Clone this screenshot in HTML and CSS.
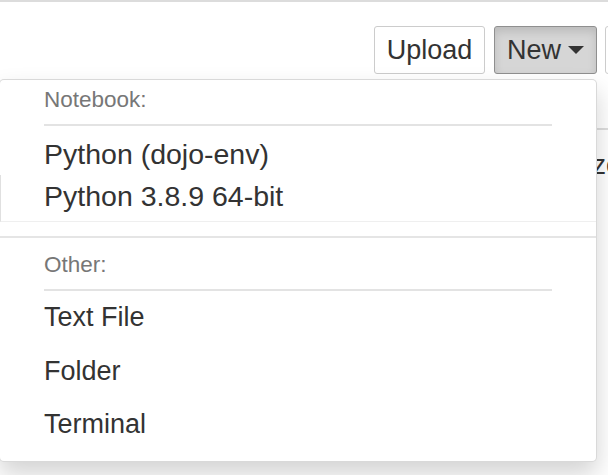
FILE: index.html
```html
<!DOCTYPE html>
<html>
<head>
<meta charset="utf-8">
<link rel="stylesheet" href="styles.css">
</head>
<body>
<div class="topbar"></div>
<div class="toolbar">
  <div class="btn btn-upload">Upload</div>
  <div class="btn btn-new">New <span class="caret"></span></div>
  <div class="btn btn-more"></div>
</div>
<div class="listpanel">
  <div class="listhead">File size</div>
</div>

<div class="dropdown">
  <div class="dd-header">Notebook:</div>
  <div class="dd-rule"></div>
  <div class="kernels">
    <div class="dd-kernel">Python (dojo-env)</div>
    <div class="dd-kernel dd-kernel-framed">Python 3.8.9 64-bit</div>
  </div>
  <div class="dd-divider"></div>
  <div class="dd-header dd-header-other">Other:</div>
  <div class="dd-rule dd-rule-other"></div>
  <div class="dd-item">Text File</div>
  <div class="dd-item">Folder</div>
  <div class="dd-item">Terminal</div>
</div>
</body>
</html>
```
FILE: styles.css
```css
html, body {
  margin: 0;
  padding: 0;
}
body {
  width: 608px;
  height: 475px;
  overflow: hidden;
  position: relative;
  background: #fff;
  font-family: "Liberation Sans", Arial, Helvetica, sans-serif;
  color: #333;
}
.topbar {
  height: 2px;
  background: #dcdcdc;
}
.toolbar {
  display: flex;
  gap: 9px;
  padding: 24px 0 0 374px;
}
.btn {
  box-sizing: border-box;
  height: 48px;
  flex: none;
  display: flex;
  align-items: center;
  justify-content: center;
  border: 1px solid #ccc;
  border-radius: 3px;
  background: #fff;
  font-size: 27px;
  color: #333;
  white-space: nowrap;
}
.btn-upload {
  width: 111px;
}
.btn-new {
  width: 103px;
  background: #d6d6d6;
  border-color: #8f8f8f;
  box-shadow: inset 0 5px 9px rgba(0, 0, 0, 0.12);
}
.caret {
  display: inline-block;
  width: 0;
  height: 0;
  margin-left: 7px;
  border-top: 8px solid #333;
  border-left: 8px solid transparent;
  border-right: 8px solid transparent;
}
.btn-more {
  margin-left: -1px;
  width: 50px;
}
.listpanel {
  margin-top: 54px;
  border-top: 2px solid #dddddd;
}
.listhead {
  padding: 8px 0 0 522px;
  font-size: 27px;
  line-height: 54px;
  white-space: nowrap;
  color: #333;
}
.dropdown {
  position: absolute;
  top: 79px;
  left: -1px;
  width: 598px;
  box-sizing: border-box;
  background: #fff;
  border: 1px solid rgba(0, 0, 0, 0.15);
  border-radius: 5px;
  box-shadow: 0 12px 24px rgba(0, 0, 0, 0.175);
  padding: 0 0 9px;
}
.dd-header {
  padding: 4px 0 0 44px;
  font-size: 22.5px;
  line-height: 32px;
  color: #777;
}
.dd-header-other {
  padding-top: 11px;
}
.dd-rule {
  height: 2px;
  margin: 8px 44px 0 44px;
  background: #e3e3e3;
}
.dd-rule-other {
  margin-top: 8px;
}
.kernels {
  margin-top: 7px;
}
.dd-kernel {
  padding-left: 44px;
  font-size: 28.5px;
  line-height: 42px;
  color: #333;
}
.dd-kernel-framed {
  padding-bottom: 4px;
  border-left: 1px solid #e0e0e0;
  border-bottom: 1px solid #efefef;
  padding-left: 43px;
}
.dd-divider {
  height: 2px;
  margin-top: 14px;
  background: #e5e5e5;
}
.dd-item {
  padding-left: 44px;
  font-size: 27px;
  line-height: 53.5px;
  color: #333;
}
```
